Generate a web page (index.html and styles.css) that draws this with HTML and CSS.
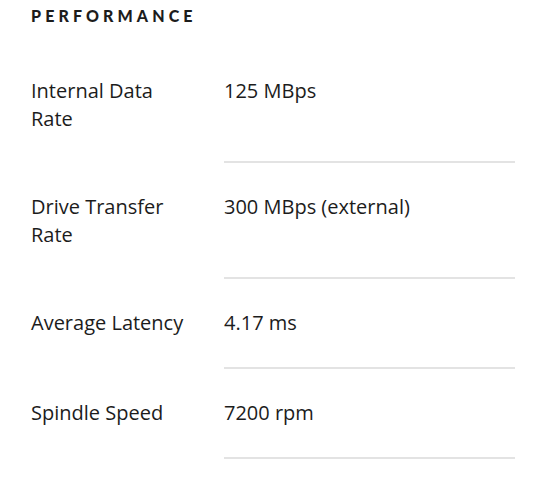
FILE: index.html
```html
<!DOCTYPE html>
<html>
<head>
<meta charset="utf-8">
<link rel="stylesheet" href="styles.css">
</head>
<body>
<section class="specs">
  <h2 class="specs-title">PERFORMANCE</h2>
  <div class="spec-row">
    <div class="spec-label">Internal Data Rate</div>
    <div class="spec-value">125 MBps</div>
  </div>
  <div class="spec-row">
    <div class="spec-label">Drive Transfer Rate</div>
    <div class="spec-value">300 MBps (external)</div>
  </div>
  <div class="spec-row">
    <div class="spec-label">Average Latency</div>
    <div class="spec-value">4.17 ms</div>
  </div>
  <div class="spec-row">
    <div class="spec-label">Spindle Speed</div>
    <div class="spec-value">7200 rpm</div>
  </div>
</section>
</body>
</html>
```

FILE: styles.css
```css
html, body {
  margin: 0;
  padding: 0;
  background: #ffffff;
}
body {
  font-family: "Open Sans", Lato, sans-serif;
  color: #1c1c1c;
}
.specs {
  width: 484px;
  padding: 6px 0 0 31px;
}
.specs-title {
  margin: 0 0 21px 0;
  font-family: Lato, sans-serif;
  font-size: 16px;
  line-height: 20px;
  font-weight: 900;
  letter-spacing: 4.1px;
}
.spec-row {
  display: flex;
  font-size: 20px;
  line-height: 28px;
}
.spec-label {
  width: 193px;
  flex: none;
  padding: 30px 33px 30px 0;
  box-sizing: border-box;
}
.spec-value {
  flex: 1;
  padding: 30px 0 30px 0;
  border-bottom: 2px solid #e3e3e3;
}
```
